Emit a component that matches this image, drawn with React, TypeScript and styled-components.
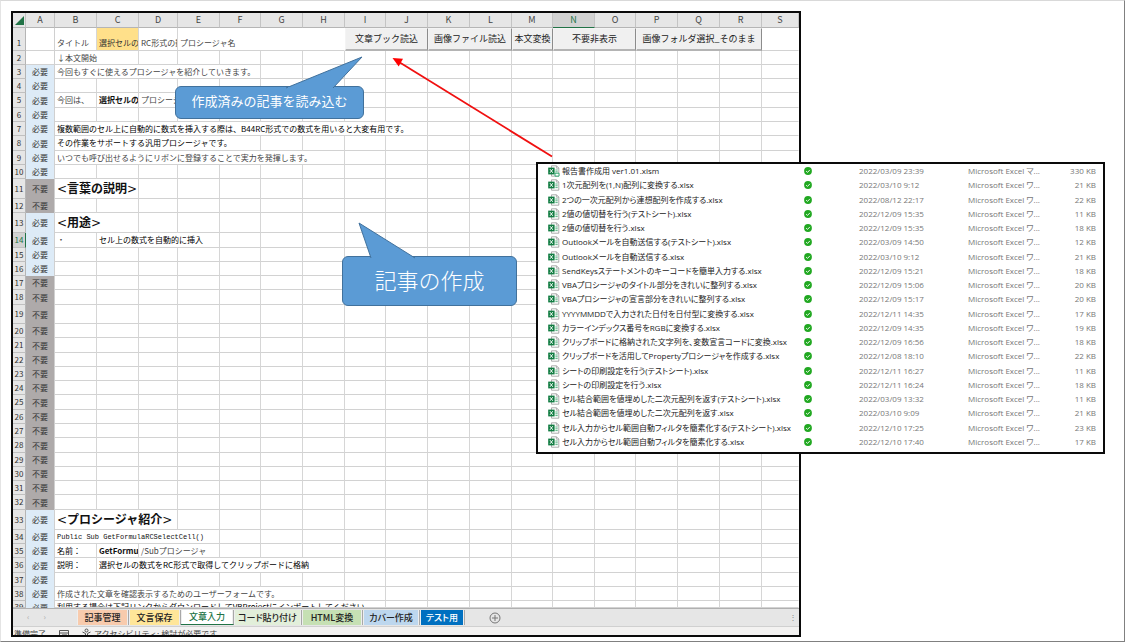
import React from "react";
import styled, { createGlobalStyle, css } from "styled-components";

const GlobalStyle = createGlobalStyle`
  *, *::before, *::after { box-sizing: border-box; }
  body {
    margin: 0;
    background: #fff;
    font-family: "Noto Sans CJK JP", sans-serif;
    font-size: 8px;
    color: #222;
  }
`;

const Page = styled.main`
  position: relative;
  display: grid;
  grid-template-columns: minmax(0, 790fr) minmax(0, 323fr);
  padding: 10px 0 4px 10px;
  border: 1px solid #808080;
  border-top-color: #d9d9d9;
  border-left-color: #e4e4e4;
  overflow: hidden;
`;

const Workbook = styled.section`
  display: flex;
  flex-direction: column;
  border: 2px solid #0a0a0a;
  overflow: hidden;
`;

/* ---------- worksheet grid ---------- */

const Sheet = styled.table`
  width: 100%;
  table-layout: fixed;
  border-collapse: separate;
  border-spacing: 0;
  line-height: 10px;
`;

const Col = styled.col<{ $w?: number }>`
  ${(p) => p.$w && `width: ${p.$w}px;`}
`;

const Row = styled.tr<{ $h: number }>`
  height: ${(p) => p.$h}px;
`;

const ColumnHead = styled.th<{ $active?: boolean }>`
  padding: 0;
  font-size: 9px;
  font-weight: 400;
  color: ${(p) => (p.$active ? "#217346" : "#444")};
  background: ${(p) => (p.$active ? "#d2d2d2" : "#e6e6e6")};
  border-right: 1px solid #c4c4c4;
  border-bottom: 1px solid ${(p) => (p.$active ? "#217346" : "#b5b5b5")};
`;

const CornerHead = styled(ColumnHead)`
  svg {
    display: block;
    margin-left: 2px;
  }
`;

const RowHead = styled.th<{ $active?: boolean; $low?: boolean }>`
  padding: ${(p) => (p.$low ? "0 0 2px" : "0")};
  font-size: 8px;
  font-weight: 400;
  vertical-align: ${(p) => (p.$low ? "bottom" : "middle")};
  color: ${(p) => (p.$active ? "#217346" : "#333")};
  background: ${(p) => (p.$active ? "#d2d2d2" : "#e6e6e6")};
  border-right: 1px solid ${(p) => (p.$active ? "#217346" : "#b5b5b5")};
  border-bottom: 1px solid #c0c0c0;
`;

type Tone = "plain" | "dark" | "bold" | "code" | "title" | "marked";

const tones = {
  plain: css`color: #444;`,
  dark: css`color: #000;`,
  bold: css`color: #111; font-weight: 700;`,
  code: css`
    color: #111;
    font-family: "Liberation Mono", monospace;
    font-size: 7px;
  `,
  title: css`
    color: #111;
    font-size: 12px;
    font-weight: 700;
    line-height: 14px;
    span {
      font-family: "DejaVu Sans", sans-serif;
      font-weight: 400;
    }
  `,
  marked: css`
    color: #333;
    background: #ffe08a;
  `,
};

const Cell = styled.td<{ $tone?: Tone; $bare?: boolean; $low?: boolean }>`
  padding: ${(p) => (p.$low ? "0 0 2px 2px" : "0 0 0 2px")};
  overflow: hidden;
  white-space: nowrap;
  vertical-align: ${(p) => (p.$low ? "bottom" : "middle")};
  border-right: 1px solid ${(p) => (p.$bare ? "transparent" : "#d6d6d6")};
  border-bottom: 1px solid #d2d2d2;
  ${(p) => tones[p.$tone ?? "plain"]}
`;

const FlagCell = styled.td<{ $flag: string }>`
  padding: 0;
  text-align: center;
  white-space: nowrap;
  color: #333;
  border-right: 1px solid #d0d0d0;
  background: ${(p) =>
    p.$flag === "必要" ? "#ddebf7" : p.$flag === "不要" ? "#aeaaaa" : "#fff"};
  ${(p) => !p.$flag && "border-bottom: 1px solid #d2d2d2;"}
`;

const Clip = styled.div`
  height: 6px;
  padding-top: 1px;
  overflow: hidden;
`;

const ButtonCell = styled.td`
  padding: 0;
`;

const MacroButton = styled.button`
  display: block;
  width: 100%;
  height: 23px;
  padding: 0;
  border: 1px solid #f4f4f4;
  border-right-color: #8c8c8c;
  border-bottom: 2px solid #b4b4b4;
  background: #f0f0f0;
  color: #222;
  font: 400 9px/14px "Noto Sans CJK JP", sans-serif;
  white-space: nowrap;
`;

/* ---------- bottom bars ---------- */

const TabBar = styled.nav`
  display: flex;
  align-items: stretch;
  height: 19px;
  padding: 1px 2px 1px 0;
  background: #e6e6e6;
  border-top: 1px solid #b0b0b0;
  border-bottom: 1px solid #d0d0d0;
`;

const Arrows = styled.div`
  display: flex;
  gap: 14px;
  width: 64px;
  padding-left: 14px;
  color: #aaa;
  line-height: 14px;
`;

const SheetTab = styled.button<{ $bg: string; $w: number; $active?: boolean }>`
  flex: none;
  width: ${(p) => p.$w}px;
  padding: 0;
  border: 0;
  border-right: 1px solid #a8a8a8;
  ${(p) => p.$active && "border-bottom: 1px solid #217346;"}
  box-shadow: inset -1px 0 #eee, inset 1px 0 #eee;
  background: ${(p) => p.$bg};
  color: ${(p) => (p.$active ? "#217346" : p.$bg === "#0070c0" ? "#fff" : "#222")};
  font: 500 9px/14px "Noto Sans CJK JP", sans-serif;
  font-feature-settings: "palt";
  white-space: nowrap;
`;

const AddTab = styled.button`
  display: flex;
  align-items: center;
  margin-left: 24px;
  padding: 0;
  border: 0;
  background: none;
`;

const Grip = styled.span`
  margin-left: auto;
  color: #888;
  line-height: 14px;
`;

const StatusBar = styled.footer`
  display: flex;
  gap: 3px;
  height: 8px;
  padding: 1px 1px 0;
  overflow: hidden;
  background: #f3f2f1;
  color: #444;
  line-height: 12px;
  white-space: nowrap;

  svg { flex: none; }
`;

const StatusText = styled.span<{ $w?: number }>`
  ${(p) => p.$w && `width: ${p.$w}px;`}
`;

/* ---------- file list window ---------- */

const FileWindow = styled.section`
  position: absolute;
  top: 161px;
  left: 535px;
  right: 19px;
  padding: 0 7px 3px 10px;
  border: 2px solid #0a0a0a;
  background: #fff;
`;

const FileTable = styled.table`
  width: 100%;
  height: 285px;
  table-layout: fixed;
  border-collapse: collapse;
  font-family: "Open Sans", "Noto Sans CJK JP", sans-serif;
  font-feature-settings: "palt";
  line-height: 10px;
  white-space: nowrap;
`;

const FileCell = styled.td<{ $muted?: boolean; $end?: boolean }>`
  padding: 0;
  color: ${(p) => (p.$muted ? "#777" : "#222")};
  text-align: ${(p) => (p.$end ? "right" : "left")};

  svg { display: block; }
`;

/* ---------- annotations ---------- */

const Callout = styled.div<{
  $x: number;
  $y: number;
  $w: number;
  $h: number;
  $size: number;
  $light?: boolean;
}>`
  position: absolute;
  left: ${(p) => p.$x}px;
  top: ${(p) => p.$y}px;
  width: ${(p) => p.$w}px;
  height: ${(p) => p.$h}px;
  display: flex;
  align-items: center;
  justify-content: center;
  padding-bottom: 5px;
  border: 1px solid #41719c;
  border-radius: 6px;
  background: #5b9bd5;
  color: #fff;
  font-size: ${(p) => p.$size}px;
  font-weight: ${(p) => (p.$light ? 300 : 400)};
  line-height: 1;
  white-space: nowrap;

  svg {
    position: absolute;
    left: -1px;
    bottom: 100%;
    margin-bottom: -1px;
    overflow: visible;
  }
`;

const RedArrow = styled.svg`
  position: absolute;
  left: 390px;
  top: 54px;
`;

/* ---------- data ---------- */

const columns: [string, number?][] = [
  ["A", 29], ["B", 42], ["C", 42], ["D", 39], ["E", 42], ["F", 41], ["G", 42],
  ["H", 42], ["I", 41], ["J", 42], ["K", 42], ["L", 42], ["M", 41], ["N", 42],
  ["O", 41], ["P", 42], ["Q", 42], ["R", 42], ["S"],
];

const rowHeights = [
  23, 14, 14, 14, 15, 14, 14, 15, 14, 14, 20, 14, 20, 15, 14, 14, 14, 15, 19, 14,
  15, 14, 14, 14, 15, 14, 14, 15, 14, 14, 14, 15, 20, 14, 14, 15, 14, 14, 7,
];

interface Entry {
  text: string;
  span?: number;
  tone?: Tone;
}

const content: Record<number, Entry[]> = {
  2: [{ text: "↓本文開始", span: 2 }],
  3: [{ text: "今回もすぐに使えるプロシージャを紹介していきます。", span: 5 }],
  5: [
    { text: "今回は、" },
    { text: "選択セルの", tone: "bold" },
    { text: "プロシージャ", span: 2 },
  ],
  7: [
    {
      text: "複数範囲のセル上に自動的に数式を挿入する際は、B44RC形式での数式を用いると大変有用です。",
      span: 9,
      tone: "dark",
    },
  ],
  8: [{ text: "その作業をサポートする汎用プロシージャです。", span: 5, tone: "dark" }],
  9: [{ text: "いつでも呼び出せるようにリボンに登録することで実力を発揮します。", span: 7 }],
  11: [{ text: "言葉の説明", span: 2, tone: "title" }],
  13: [{ text: "用途", span: 2, tone: "title" }],
  14: [{ text: "・" }, { text: "セル上の数式を自動的に挿入", span: 3, tone: "dark" }],
  33: [{ text: "プロシージャ紹介", span: 3, tone: "title" }],
  34: [{ text: "Public Sub GetFormulaRCSelectCell()", span: 4, tone: "code" }],
  35: [
    { text: "名前：", tone: "dark" },
    { text: "GetFormu", tone: "bold" },
    { text: "/Subプロシージャ", span: 2 },
  ],
  36: [
    { text: "説明：", tone: "dark" },
    { text: "選択セルの数式をRC形式で取得してクリップボードに格納", span: 6, tone: "dark" },
  ],
  38: [{ text: "作成された文章を確認表示するためのユーザーフォームです。", span: 6 }],
  39: [
    {
      text: "利用する場合は下記リンクからダウンロードしてVBProjectにインポートしてください",
      span: 8,
      tone: "dark",
    },
  ],
};

const flagFor = (row: number) => {
  if (row < 3) return "";
  if (row === 11 || row === 12 || (row >= 17 && row <= 32)) return "不要";
  return "必要";
};

const macros: [string, number][] = [
  ["文章ブック読込", 2],
  ["画像ファイル読込", 2],
  ["本文変換", 1],
  ["不要非表示", 2],
  ["画像フォルダ選択_そのまま", 3],
];

const tabs: [string, string, number][] = [
  ["記事管理", "#f8cbad", 52],
  ["文言保存", "#ffe699", 52],
  ["文章入力", "#ffffff", 53],
  ["コード貼り付け", "#e2efda", 68],
  ["HTML変換", "#c6e0b4", 61],
  ["カバー作成", "#bdd7ee", 57],
  ["テスト用", "#0070c0", 45],
];

const files: [string, string, string][] = [
  ["報告書作成用 ver1.01.xlsm", "2022/03/09 23:39", "330"],
  ["1次元配列を(1,N)配列に変換する.xlsx", "2022/03/10 9:12", "21"],
  ["2つの一次元配列から連想配列を作成する.xlsx", "2022/08/12 22:17", "22"],
  ["2値の値切替を行う(テストシート).xlsx", "2022/12/09 15:35", "11"],
  ["2値の値切替を行う.xlsx", "2022/12/09 15:35", "18"],
  ["Outlookメールを自動送信する(テストシート).xlsx", "2022/03/09 14:50", "12"],
  ["Outlookメールを自動送信する.xlsx", "2022/03/10 9:12", "21"],
  ["SendKeysステートメントのキーコードを簡単入力する.xlsx", "2022/12/09 15:21", "18"],
  ["VBAプロシージャのタイトル部分をきれいに整列する.xlsx", "2022/12/09 15:06", "20"],
  ["VBAプロシージャの宣言部分をきれいに整列する.xlsx", "2022/12/09 15:17", "20"],
  ["YYYYMMDDで入力された日付を日付型に変換する.xlsx", "2022/12/11 14:35", "17"],
  ["カラーインデックス番号をRGBに変換する.xlsx", "2022/12/09 14:35", "19"],
  ["クリップボードに格納された文字列を、変数宣言コードに変換.xlsx", "2022/12/09 16:56", "18"],
  ["クリップボードを活用してPropertyプロシージャを作成する.xlsx", "2022/12/08 18:10", "22"],
  ["シートの印刷設定を行う(テストシート).xlsx", "2022/12/11 16:27", "11"],
  ["シートの印刷設定を行う.xlsx", "2022/12/11 16:24", "18"],
  ["セル結合範囲を値埋めした二次元配列を返す(テストシート).xlsx", "2022/03/09 13:32", "11"],
  ["セル結合範囲を値埋めした二次元配列を返す.xlsx", "2022/03/10 9:09", "21"],
  ["セル入力からセル範囲自動フィルタを簡素化する(テストシート).xlsx", "2022/12/10 17:25", "23"],
  ["セル入力からセル範囲自動フィルタを簡素化する.xlsx", "2022/12/10 17:40", "17"],
];

/* ---------- icons ---------- */

const ExcelIcon = ({ macro }: { macro?: boolean }) => (
  <svg width="12" height="12" viewBox="0 0 12 12" aria-hidden="true">
    <path d="M3.5 .8h5l2.3 2.3v8.1H3.5z" fill="#fff" stroke="#8a8a8a" strokeWidth=".7" />
    <path d="M8.4 .8v2.4h2.4" fill="none" stroke="#8a8a8a" strokeWidth=".6" />
    <path d="M7.4 5h2.3M7.4 6.8h2.3M7.4 8.6h2.3" stroke="#2f9e63" strokeWidth=".8" />
    <rect x=".2" y="2.6" width="6.4" height="6.8" fill="#107c41" />
    <path d="M2 4.2l2.8 3.6M4.8 4.2L2 7.8" stroke="#fff" strokeWidth="1" />
    {macro && (
      <path d="M7 8.2h4v2.9H7z" fill="#fff" stroke="#21a366" strokeWidth=".9" />
    )}
  </svg>
);

const SyncedIcon = () => (
  <svg width="8" height="8" viewBox="0 0 8 8" role="img" aria-label="同期済み">
    <circle cx="4" cy="4" r="3.9" fill="#22a822" />
    <path d="M2.1 4.1l1.4 1.3 2.4-2.5" fill="none" stroke="#fff" strokeWidth=".9" />
  </svg>
);

/* ---------- parts ---------- */

const FirstRow = () => (
  <Row $h={rowHeights[0]}>
    <RowHead $low>1</RowHead>
    <FlagCell $flag="" />
    <Cell $low>タイトル</Cell>
    <Cell $low $tone="marked">選択セルの</Cell>
    <Cell $low>RC形式の数</Cell>
    <Cell $low $bare colSpan={4}>プロシージャ名</Cell>
    {macros.map(([label, span]) => (
      <ButtonCell key={label} colSpan={span}>
        <MacroButton type="button">{label}</MacroButton>
      </ButtonCell>
    ))}
    <Cell $bare />
  </Row>
);

const DataRow = ({ row }: { row: number }) => {
  const entries = content[row] ?? [];
  const used = entries.reduce((sum, e) => sum + (e.span ?? 1), 0);
  const flag = flagFor(row);
  const last = row === rowHeights.length;
  const wrap = (node: React.ReactNode) => (last ? <Clip>{node}</Clip> : node);
  return (
    <Row $h={rowHeights[row - 1]}>
      <RowHead $active={row === 14}>{wrap(row)}</RowHead>
      <FlagCell $flag={flag}>{wrap(flag)}</FlagCell>
      {entries.map((e) => (
        <Cell key={e.text} colSpan={e.span} $tone={e.tone}>
          {e.tone === "title" ? (
            <>
              <span>&lt;</span>
              {e.text}
              <span>&gt;</span>
            </>
          ) : (
            wrap(e.text)
          )}
        </Cell>
      ))}
      {Array.from({ length: 18 - used }, (_, i) => (
        <Cell key={i} $bare={i === 17 - used} />
      ))}
    </Row>
  );
};

export default function App() {
  return (
    <>
      <GlobalStyle />
      <Page>
        <Workbook>
          <Sheet>
            <colgroup>
              <Col $w={13} />
              {columns.map(([name, w]) => (
                <Col key={name} $w={w} />
              ))}
            </colgroup>
            <thead>
              <Row $h={15}>
                <CornerHead>
                  <svg width="9" height="9" viewBox="0 0 9 9" aria-hidden="true">
                    <path d="M9 0v9H0z" fill="#217346" />
                  </svg>
                </CornerHead>
                {columns.map(([name]) => (
                  <ColumnHead key={name} $active={name === "N"}>{name}</ColumnHead>
                ))}
              </Row>
            </thead>
            <tbody>
              <FirstRow />
              {rowHeights.slice(1).map((_, i) => (
                <DataRow key={i} row={i + 2} />
              ))}
            </tbody>
          </Sheet>
          <TabBar>
            <Arrows>
              <span>‹</span>
              <span>›</span>
            </Arrows>
            {tabs.map(([label, bg, w]) => (
              <SheetTab key={label} type="button" $bg={bg} $w={w} $active={label === "文章入力"}>
                {label}
              </SheetTab>
            ))}
            <AddTab type="button" aria-label="新しいシート">
              <svg width="12" height="12" viewBox="0 0 12 12" fill="none" stroke="#777">
                <circle cx="6" cy="6" r="5" />
                <path d="M3 6h6M6 3v6" />
              </svg>
            </AddTab>
            <Grip>⋮</Grip>
          </TabBar>
          <StatusBar>
            <StatusText $w={42}>準備完了</StatusText>
            <svg width="20" height="10" viewBox="0 0 20 10" fill="none" stroke="#555" aria-hidden="true">
              <path d="M.5 2.5h9v7h-9zM.5 5h9M3 7h5" />
            </svg>
            <svg width="9" height="10" viewBox="0 0 9 10" fill="none" stroke="#555" aria-hidden="true">
              <circle cx="4.5" cy="2.5" r="1.5" />
              <path d="M.5 4l3 1.5v4M8.5 4l-3 1.5v4" />
            </svg>
            <StatusText>アクセシビリティ: 検討が必要です</StatusText>
          </StatusBar>
        </Workbook>

        <Callout $x={174} $y={85} $w={189} $h={33} $size={13}>
          <svg width="189" height="32" viewBox="0 0 189 32" aria-hidden="true">
            <path d="M111 32L187 1L158 32" fill="#5b9bd5" stroke="#41719c" />
            <path d="M113 32h44" stroke="#5b9bd5" strokeWidth="2" />
          </svg>
          作成済みの記事を読み込む
        </Callout>

        <Callout $x={341} $y={255} $w={175} $h={50} $size={22} $light>
          <svg width="175" height="36" viewBox="0 0 175 36" aria-hidden="true">
            <path d="M29 36L17 1L73 36" fill="#5b9bd5" stroke="#41719c" />
            <path d="M30 36h41" stroke="#5b9bd5" strokeWidth="2" />
          </svg>
          記事の作成
        </Callout>

        <FileWindow>
          <FileTable>
            <colgroup>
              <Col $w={14} />
              <Col />
              <Col $w={55} />
              <Col $w={109} />
              <Col $w={88} />
              <Col $w={40} />
            </colgroup>
            <tbody>
              {files.map(([name, date, size], i) => (
                <tr key={name}>
                  <FileCell><ExcelIcon macro={i === 0} /></FileCell>
                  <FileCell>{name}</FileCell>
                  <FileCell><SyncedIcon /></FileCell>
                  <FileCell $muted>{date}</FileCell>
                  <FileCell $muted>{`Microsoft Excel ${i === 0 ? "マ" : "ワ"}...`}</FileCell>
                  <FileCell $muted $end>{size} KB</FileCell>
                </tr>
              ))}
            </tbody>
          </FileTable>
        </FileWindow>

        <RedArrow width="164" height="104" viewBox="391 55 164 104" aria-hidden="true">
          <path d="M552 156.5L399 62" stroke="#f01010" strokeWidth="1.8" />
          <path d="M392.5 58l10.5 .8l-4.3 7.8z" fill="#f00" />
        </RedArrow>
      </Page>
    </>
  );
}
